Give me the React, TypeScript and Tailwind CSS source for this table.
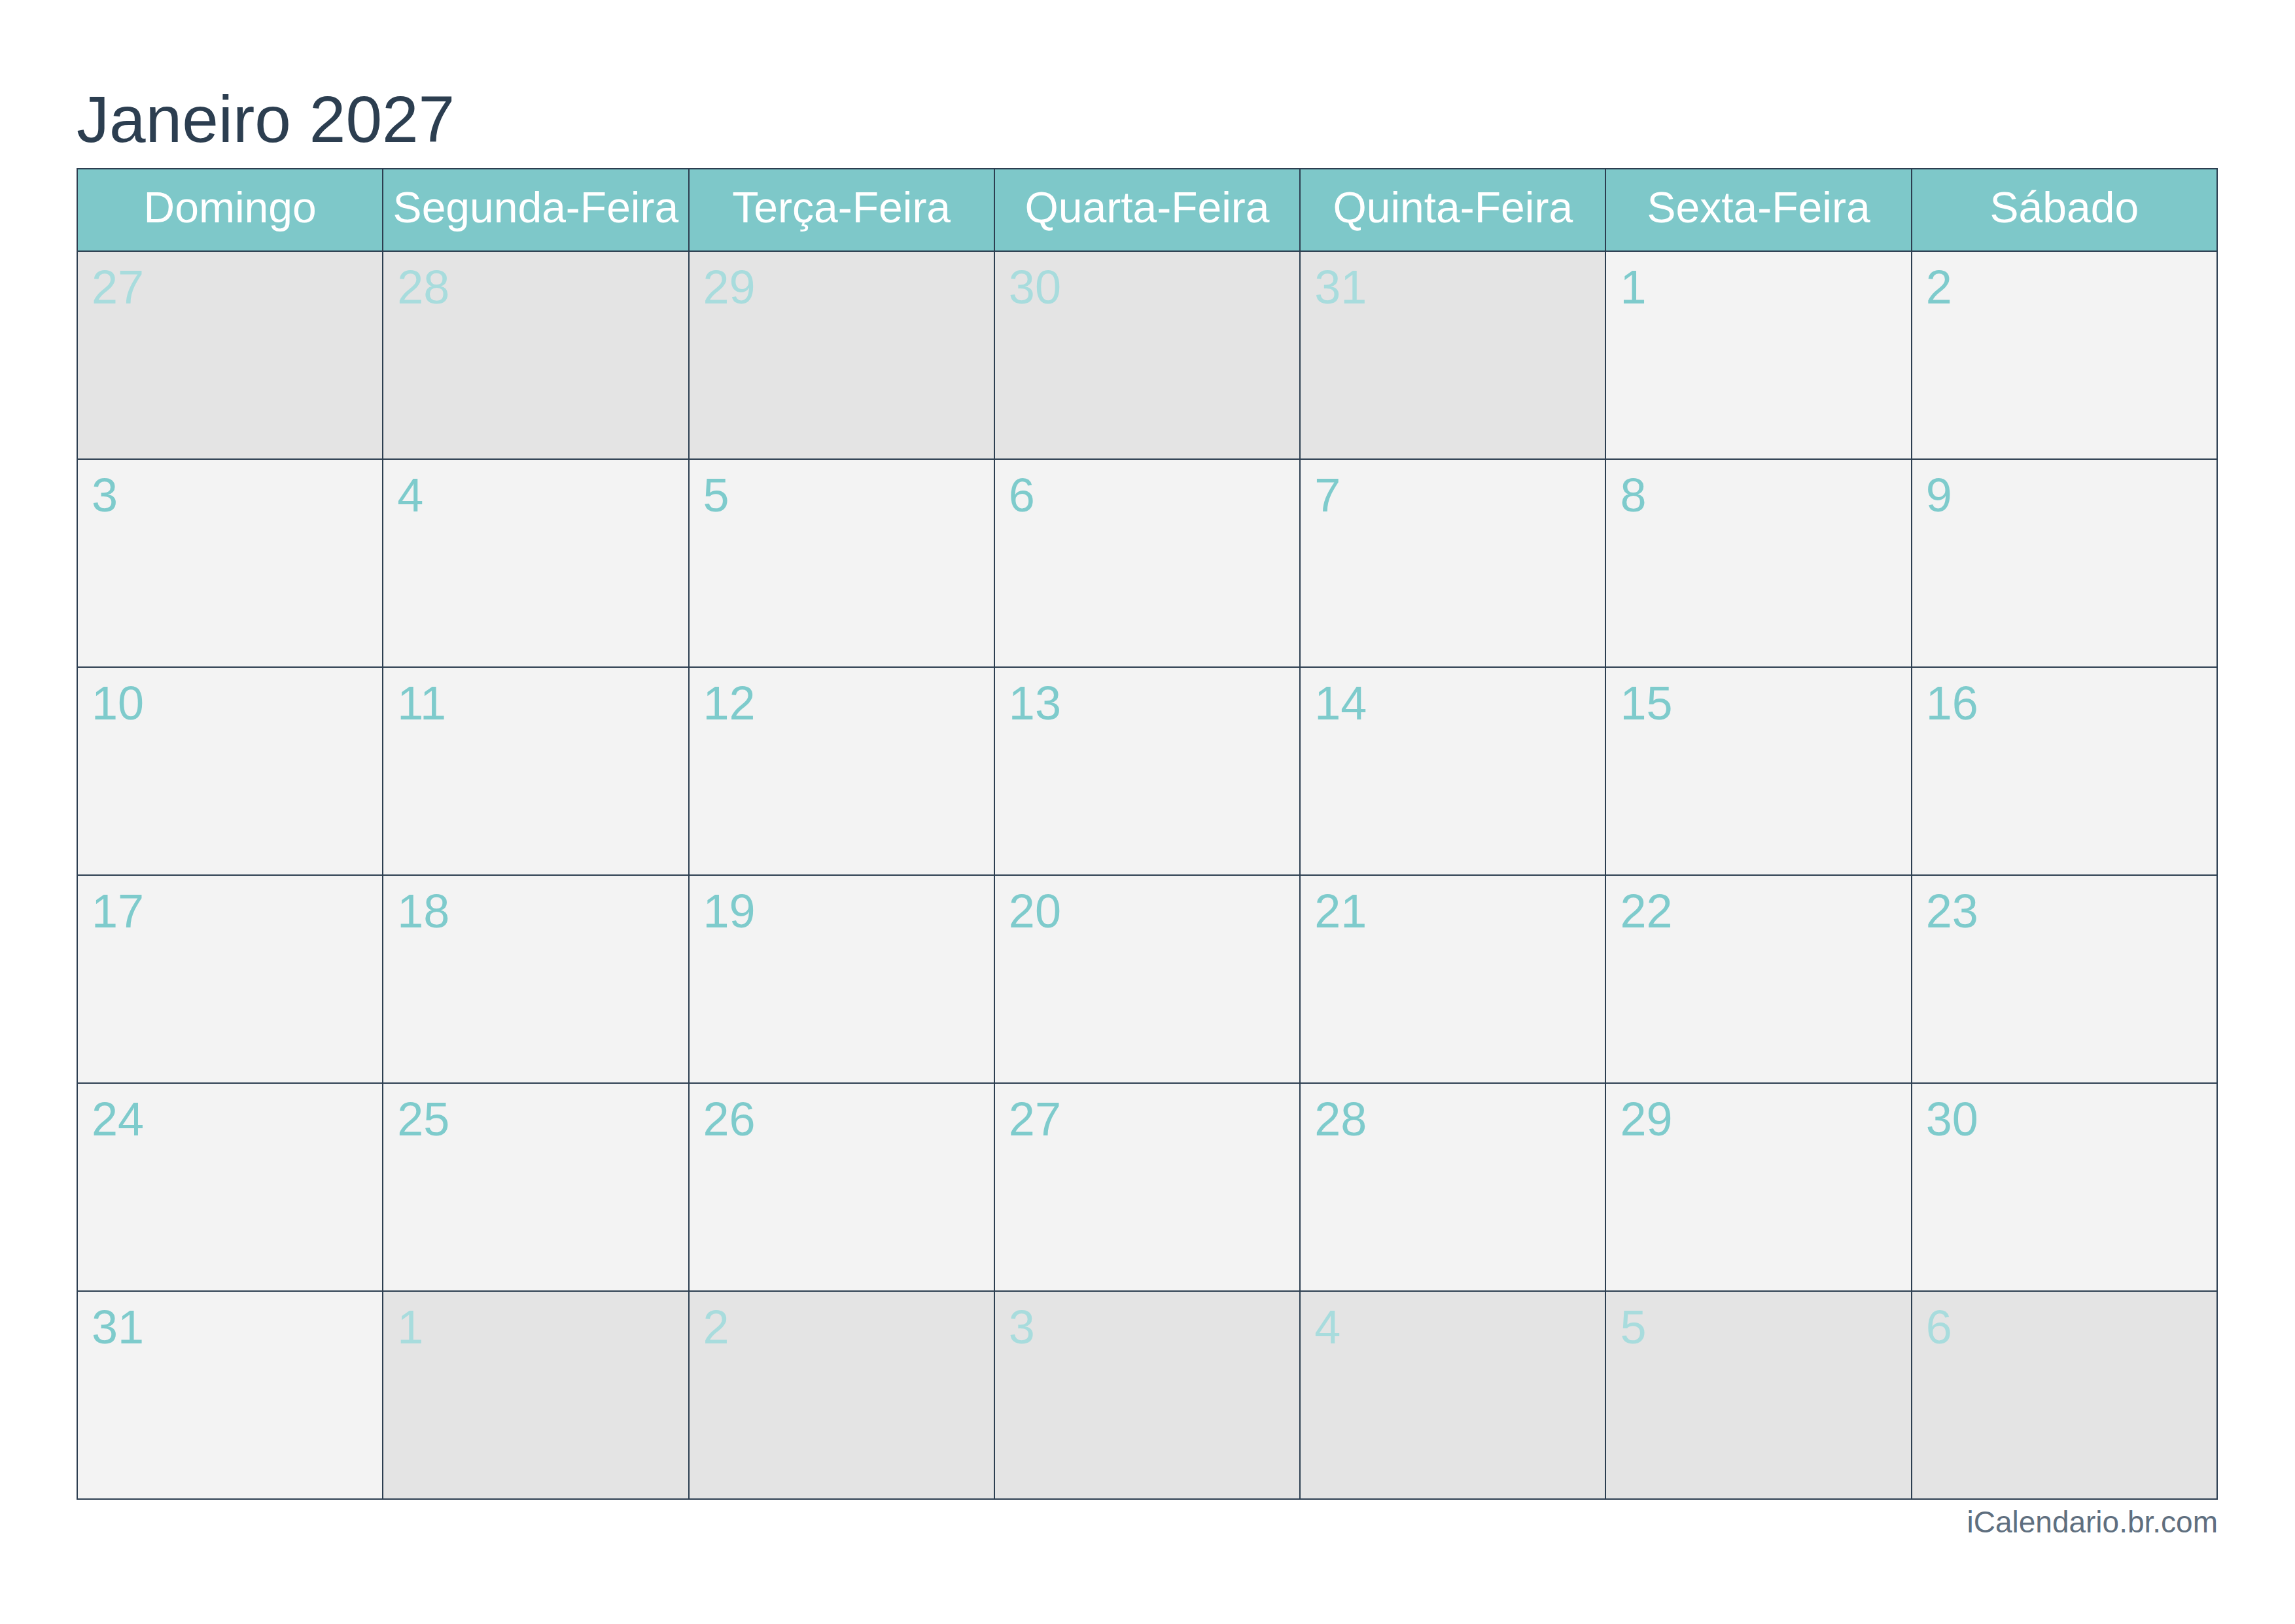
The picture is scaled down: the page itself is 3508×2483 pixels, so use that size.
import React from "react";

const days = ["Domingo", "Segunda-Feira", "Terça-Feira", "Quarta-Feira", "Quinta-Feira", "Sexta-Feira", "Sábado"];

type Cell = { n: number; cur: boolean };

const cells: Cell[] = [];
[27, 28, 29, 30, 31].forEach((n) => cells.push({ n, cur: false }));
for (let i = 1; i <= 31; i++) cells.push({ n: i, cur: true });
[1, 2, 3, 4, 5, 6].forEach((n) => cells.push({ n, cur: false }));

export default function App() {
  return (
    <div
      className="w-[3508px] h-[2483px] bg-white pl-[117px] pt-[132px]"
      style={{ fontFamily: '"Liberation Sans", Arial, sans-serif' }}
    >
      <div className="text-[100px] leading-none text-[#2c3e50]">Janeiro 2027</div>
      <div className="mt-[25px] w-[3273px] grid grid-cols-7 border-l-2 border-t-2 border-[#2c3e50]">
        {days.map((d) => (
          <div
            key={d}
            className="h-[126px] bg-[#7ec8c9] border-r-2 border-b-2 border-[#2c3e50] flex items-center justify-center text-white text-[66px] leading-none pb-[8px] whitespace-nowrap"
          >
            {d}
          </div>
        ))}
        {cells.map((c, i) => (
          <div
            key={i}
            className={
              c.cur
                ? "h-[318px] bg-[#f3f3f3] border-r-2 border-b-2 border-[#2c3e50] pt-[18px] pl-[21px] text-[72px] leading-none text-[#7ecbcc]"
                : "h-[318px] bg-[#e4e4e4] border-r-2 border-b-2 border-[#2c3e50] pt-[18px] pl-[21px] text-[72px] leading-none text-[#a8dcdd]"
            }
          >
            {c.n}
          </div>
        ))}
      </div>
      <div className="w-[3273px] mt-[11px] flex justify-end text-[46px] leading-none text-[#5f6f7f]">
        iCalendario.br.com
      </div>
    </div>
  );
}
